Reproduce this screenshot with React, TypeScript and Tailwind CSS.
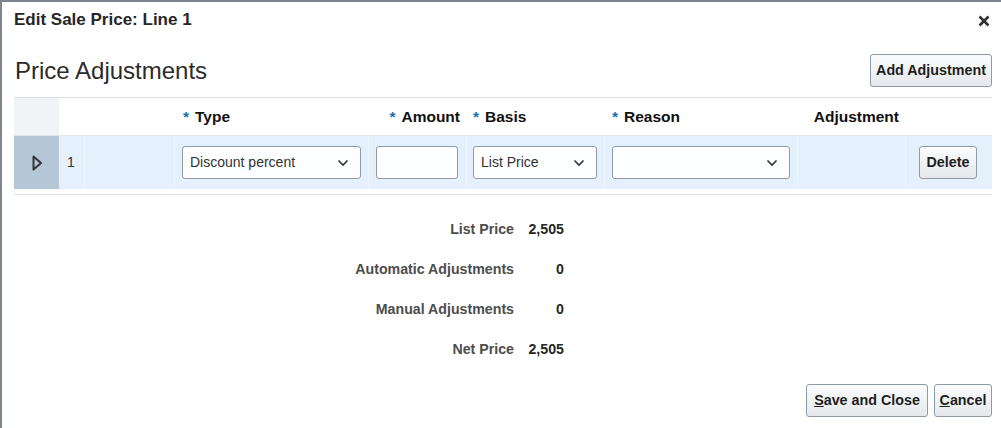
import React from "react";

// Column widths measured off the reference grid lines
const cols = "grid-cols-[45px_26px_90px_194px_98px_138px_193px_108px_1fr]";

function Chevron() {
  return (
    <svg width="12" height="8" viewBox="0 0 12 8" className="shrink-0">
      <path d="M1.5 1.5 L6 6 L10.5 1.5" fill="none" stroke="#333" strokeWidth="1.6" />
    </svg>
  );
}

function Select({ value, className }: { value?: string; className: string }) {
  return (
    <div
      className={`flex h-[33px] items-center justify-between rounded-[3px] border border-[#8e9aa5] bg-[#fdfeff] pl-[7px] pr-[11px] text-[14px] text-[#333] ${className}`}
    >
      <span>{value}</span>
      <Chevron />
    </div>
  );
}

function Button({ children, className = "" }: { children: React.ReactNode; className?: string }) {
  return (
    <button
      className={`flex h-[33px] items-center justify-center whitespace-nowrap rounded-[3px] border border-[#8d9aa7] bg-gradient-to-b from-[#fbfcfd] to-[#e5e8eb] px-[6px] text-[14.3px] font-bold text-[#1e1e1e] ${className}`}
    >
      {children}
    </button>
  );
}

function Req({ children }: { children: React.ReactNode }) {
  return (
    <span>
      <span className="mr-[6px] text-[#1b6fb6]">*</span>
      {children}
    </span>
  );
}

const summary = [
  ["List Price", "2,505"],
  ["Automatic Adjustments", "0"],
  ["Manual Adjustments", "0"],
  ["Net Price", "2,505"],
];

export default function App() {
  return (
    <div
      className="relative h-[428px] w-[1001px] overflow-hidden bg-white"
      style={{ fontFamily: '"Liberation Sans", Arial, sans-serif' }}
    >
      {/* edge of the page behind the dialog */}
      <div className="h-[2px] bg-[#7d858d]" />
      <div className="flex h-[426px]">
        <div className="w-[2px] bg-[#7d858d]" />
        <div className="flex flex-1 flex-col pl-[12px] pr-[9px]">
          {/* dialog title */}
          <div className="flex h-[36px] items-center justify-between">
            <h1 className="text-[17px] font-bold text-[#262626]">Edit Sale Price: Line 1</h1>
            <svg width="12" height="12" viewBox="0 0 12 12" className="mr-[2px] mt-[1px]">
              <path d="M1.5 1.5 L10.5 10.5 M10.5 1.5 L1.5 10.5" stroke="#333" strokeWidth="2.6" />
            </svg>
          </div>

          {/* section heading */}
          <div className="mt-[16px] flex h-[33px] items-center justify-between">
            <h2 className="ml-[1px] text-[24px] text-[#2b2b2b]">Price Adjustments</h2>
            <Button className="w-[122px]">Add Adjustment</Button>
          </div>

          {/* table */}
          <div className="mt-[10px] border-t border-[#dde1e6] text-[#111]">
            <div className={`grid ${cols} h-[38px] items-stretch border-b border-[#e3e6ea] text-[15.5px] font-bold`}>
              <div className="bg-[#f2f3f6]" />
              <div />
              <div />
              <div className="flex items-center pl-[8px]">
                <Req>Type</Req>
              </div>
              <div className="flex items-center justify-end pr-[7px]">
                <Req>Amount</Req>
              </div>
              <div className="flex items-center pl-[6px]">
                <Req>Basis</Req>
              </div>
              <div className="flex items-center pl-[7px]">
                <Req>Reason</Req>
              </div>
              <div className="flex items-center justify-end pr-[7px]">Adjustment</div>
              <div />
            </div>

            <div className={`grid ${cols} h-[53px] items-center bg-[#e4f0fc] text-[14px]`}>
              <div className="flex h-full items-center justify-center bg-[#b5c7d6]">
                <svg width="11" height="16" viewBox="0 0 11 16" className="ml-[2px]">
                  <path d="M1.5 1.5 L9 8 L1.5 14.5 Z" fill="none" stroke="#333" strokeWidth="2" strokeLinejoin="round" />
                </svg>
              </div>
              <div className="flex h-full items-center border-r border-[#eef5fd] pl-[8px] text-[#333]">1</div>
              <div className="h-full border-r border-[#eef5fd]" />
              <div className="flex h-full items-center border-r border-[#eef5fd] px-[7px]">
                <Select value="Discount percent" className="w-full" />
              </div>
              <div className="flex h-full items-center border-r border-[#eef5fd] pl-[7px] pr-[8px]">
                <div className="h-[33px] w-full rounded-[3px] border border-[#8e9aa5] bg-[#fdfeff]" />
              </div>
              <div className="flex h-full items-center border-r border-[#eef5fd] pl-[6px] pr-[7px]">
                <Select value="List Price" className="w-full" />
              </div>
              <div className="flex h-full items-center border-r border-[#eef5fd] px-[7px]">
                <Select className="w-full" />
              </div>
              <div className="h-full border-r border-[#eef5fd]" />
              <div className="flex h-full items-center justify-end pr-[15px]">
                <Button className="w-[58px]">Delete</Button>
              </div>
            </div>
            <div className="mt-[5px] border-t border-[#dde1e6]" />
          </div>

          {/* totals */}
          <div className="pt-[15px]">
            {summary.map(([label, value]) => (
              <div key={label} className="grid h-[40px] grid-cols-[500px_50px] items-center text-[14.2px] font-bold">
                <span className="text-right text-[#4d4d4d]">{label}</span>
                <span className="text-right text-[#262626]">{value}</span>
              </div>
            ))}
          </div>

          {/* footer */}
          <div className="mt-[14px] flex justify-end gap-[6px]">
            <Button className="w-[122px]">
              <span className="underline">S</span>ave and Close
            </Button>
            <Button className="w-[58px]">
              <span className="underline">C</span>ancel
            </Button>
          </div>
        </div>
      </div>
    </div>
  );
}
